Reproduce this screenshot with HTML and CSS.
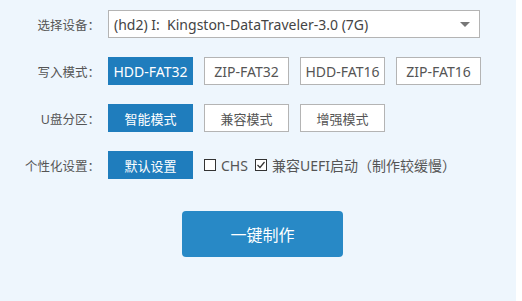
FILE: index.html
```html
<!DOCTYPE html>
<html lang="zh-CN">
<head>
    <meta charset="UTF-8">
    <title>U盘启动制作</title>
    <link rel="stylesheet" href="styles.css">
</head>
<body>
    <div class="panel">
        <div class="row">
            <span class="label">选择设备：</span>
            <div class="select">
                <span class="select-text">(hd2) I:&nbsp; Kingston-DataTraveler-3.0 (7G)</span>
                <span class="arrow"></span>
            </div>
        </div>

        <div class="row">
            <span class="label">写入模式：</span>
            <div class="btn active latin">HDD-FAT32</div>
            <div class="btn latin">ZIP-FAT32</div>
            <div class="btn latin">HDD-FAT16</div>
            <div class="btn latin">ZIP-FAT16</div>
        </div>

        <div class="row">
            <span class="label">U盘分区：</span>
            <div class="btn active">智能模式</div>
            <div class="btn">兼容模式</div>
            <div class="btn">增强模式</div>
        </div>

        <div class="row">
            <span class="label">个性化设置：</span>
            <div class="btn active">默认设置</div>
            <label class="check">
                <svg class="box" width="12" height="12" viewBox="0 0 12 12">
                    <rect x="0.5" y="0.5" width="11" height="11" fill="#fff" stroke="#333"/>
                </svg>
                CHS
            </label>
            <label class="check">
                <svg class="box" width="12" height="12" viewBox="0 0 12 12">
                    <rect x="0.5" y="0.5" width="11" height="11" fill="#fff" stroke="#333"/>
                    <path d="M2.5 6 L5 8.5 L9.5 3" fill="none" stroke="#333" stroke-width="1.2"/>
                </svg>
                兼容UEFI启动（制作较缓慢）
            </label>
        </div>

        <div class="actions">
            <div class="make-btn">一键制作</div>
        </div>
    </div>
</body>
</html>
```

FILE: styles.css
```css
body {
    margin: 0;
    background-color: #fff;
    font-family: "Noto Sans", "Noto Sans CJK SC", sans-serif;
    color: #555;
}
.panel {
    width: 516px;
    height: 301px;
    background-color: #eef6fd;
    padding-top: 10px;
    box-sizing: border-box;
}
.row {
    display: flex;
    align-items: center;
    height: 28px;
    margin-bottom: 19px;
}
.label {
    width: 100px;
    margin-right: 8px;
    text-align: right;
    font-size: 12.5px;
    color: #555;
    white-space: nowrap;
}
.select {
    width: 372px;
    height: 28px;
    box-sizing: border-box;
    border: 1px solid #b4b4b4;
    background-color: #fff;
    display: flex;
    align-items: center;
    justify-content: space-between;
    padding: 0 9px 0 5px;
    font-size: 14px;
    color: #444;
}
.arrow {
    width: 0;
    height: 0;
    border-left: 5px solid transparent;
    border-right: 5px solid transparent;
    border-top: 5px solid #777;
}
.btn {
    width: 85px;
    height: 28px;
    box-sizing: border-box;
    border: 1px solid #b4b4b4;
    background-color: #fff;
    margin-right: 11px;
    display: flex;
    justify-content: center;
    align-items: center;
    font-size: 13px;
    color: #555;
}
.btn.latin {
    font-size: 14px;
}
.btn.active {
    background-color: #1f7dbd;
    border-color: #1f7dbd;
    color: #fff;
}
.check {
    display: flex;
    align-items: center;
    font-size: 14px;
    color: #555;
    margin-right: 7px;
}
.check .box {
    margin-right: 5px;
}
.actions {
    padding-left: 182px;
    padding-top: 13px;
}
.make-btn {
    width: 161px;
    height: 46px;
    border-radius: 4px;
    background-color: #2889c6;
    color: #fff;
    font-size: 16px;
    display: flex;
    justify-content: center;
    align-items: center;
}
```
